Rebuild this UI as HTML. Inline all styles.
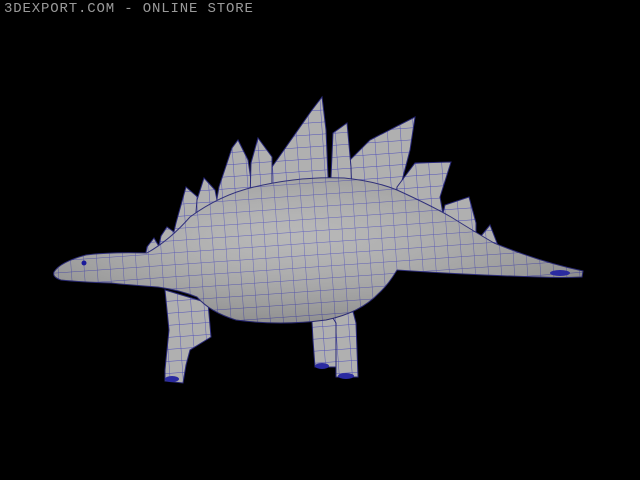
<!DOCTYPE html>
<html><head><style>
html,body{margin:0;padding:0;background:#000;}
body{width:640px;height:480px;overflow:hidden;position:relative;}
.t{position:absolute;left:4px;top:1px;font-family:"Liberation Mono",monospace;font-size:14px;color:#9a9a9a;letter-spacing:0.85px;white-space:nowrap;}
</style></head><body>
<svg width="640" height="480" style="position:absolute;left:0;top:0">
<defs>
<pattern id="grid" width="13" height="12" patternUnits="userSpaceOnUse" patternTransform="rotate(-4)">
<rect width="13" height="12" fill="#b0b0b0"/>
<path d="M0 0H13M0 0V12" stroke="#5050b8" stroke-width="0.9" fill="none"/>
</pattern>
<radialGradient id="sh" cx="0.45" cy="0.4" r="0.7">
<stop offset="0" stop-color="#fff" stop-opacity="0.1"/>
<stop offset="1" stop-color="#000" stop-opacity="0.25"/>
</radialGradient>
</defs>
<g fill="url(#grid)" stroke="#2a2a7a" stroke-width="1">
<!-- plates -->
<path d="M272,200 L272,167 L312,110 L322,97 L326,130 L329,200Z"/>
<path d="M335,200 L340,170 L370,140 L415,117 L410,150 L397,200Z"/>
<path d="M215,210 L219,187 L232,148 L238,140 L248,160 L254,200Z"/>
<path d="M250,200 L251,163 L258,138 L272,157 L272,200Z"/>
<path d="M330,200 L333,133 L347,123 L351,167 L352,200Z"/>
<path d="M395,210 L397,187 L415,163 L451,162 L440,197 L445,225Z"/>
<path d="M172,240 L176,223 L186,187 L201,200 L205,230Z"/>
<path d="M195,225 L197,200 L204,178 L215,190 L220,215Z"/>
<path d="M440,225 L445,205 L469,197 L476,223 L476,240Z"/>
<path d="M478,248 L481,236 L490,225 L497,243 L500,252Z"/>
<path d="M145,258 L147,247 L154,238 L161,250 L163,258Z"/>
<path d="M158,250 L161,236 L167,227 L174,232 L178,245Z"/>
<!-- legs -->
<path d="M165,290 L169,330 L165,370 L165,381 L183,383 L186,365 L190,350 L211,337 L208,303Z"/>
<path d="M300,300 L311,303 L313,340 L315,367 L336,367 L338,340 L344,320 L340,300Z"/>
<path d="M325,305 L336,323 L336,377 L358,377 L356,323 L350,300Z"/>
<!-- body -->
<path d="M54,272 Q60,262 86,255 Q110,252 147,253 Q170,240 190,217 Q220,195 254,187 Q300,176 344,178 Q375,181 397,190 Q430,205 451,217 Q475,232 494,243 Q540,262 583,271 L582,277 Q560,278 540,277 Q470,275 397,270 Q388,285 379,293 Q360,313 326,320 Q280,326 236,320 Q210,312 197,297 Q180,290 158,287 Q130,285 111,283 Q80,282 61,280 Q52,277 54,272Z"/>
</g>
<path d="M54,272 Q60,262 86,255 Q110,252 147,253 Q170,240 190,217 Q220,195 254,187 Q300,176 344,178 Q375,181 397,190 Q430,205 451,217 Q475,232 494,243 Q540,262 583,271 L582,277 Q560,278 540,277 Q470,275 397,270 Q388,285 379,293 Q360,313 326,320 Q280,326 236,320 Q210,312 197,297 Q180,290 158,287 Q130,285 111,283 Q80,282 61,280 Q52,277 54,272Z" fill="url(#sh)"/>
<circle cx="84" cy="263" r="2.5" fill="#1a1a9a"/>
<g fill="#2a2aa0"><ellipse cx="172" cy="379" rx="7" ry="3"/><ellipse cx="322" cy="366" rx="7" ry="3"/><ellipse cx="346" cy="376" rx="8" ry="3"/><ellipse cx="560" cy="273" rx="10" ry="3"/></g>
</svg>
<div class="t">3DEXPORT.COM - ONLINE STORE</div>
</body></html>
